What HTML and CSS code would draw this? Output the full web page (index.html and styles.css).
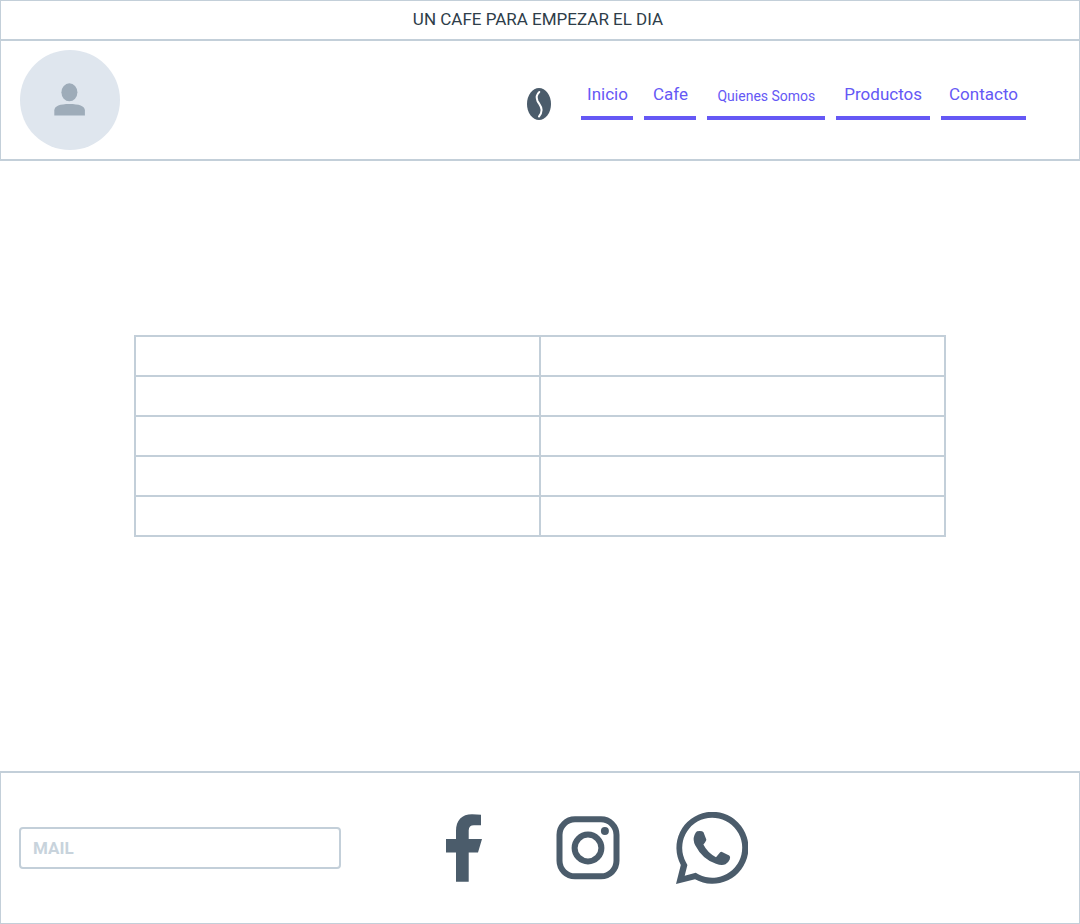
FILE: index.html
```html
<!DOCTYPE html>
<html lang="es">
<head>
<meta charset="utf-8">
<meta name="viewport" content="width=device-width, initial-scale=1">
<title>Un cafe para empezar el dia</title>
<link rel="stylesheet" href="styles.css">
</head>
<body class="page">
<p class="banner">UN CAFE PARA EMPEZAR EL DIA</p>
<header class="header">
  <svg class="avatar" viewBox="0 0 100 100" role="img" aria-label="Perfil">
    <circle class="avatar-disc" cx="50" cy="50" r="50"/>
    <g class="avatar-person">
      <ellipse cx="49.4" cy="42.3" rx="8" ry="9"/>
      <path d="M34.3 65.6V60.5C34.3 56 40 54 49.4 54S64.9 56 64.9 60.5V65.6Z"/>
    </g>
  </svg>
  <nav class="nav">
    <svg class="bean" viewBox="0 0 24 32" aria-hidden="true">
      <ellipse cx="12" cy="16" rx="12" ry="16"/>
      <path class="bean-crease" d="M12.3 4C10 6 9 9.500 10.500 13C12 16 14.800 18.500 14.600 22C14.500 25 13.500 27 12 28.500"/>
    </svg>
    <div class="links">
      <a class="link link-short" href="#inicio">Inicio</a>
      <a class="link link-short" href="#cafe">Cafe</a>
      <a class="link link-small" href="#quienes">Quienes Somos</a>
      <a class="link" href="#productos">Productos</a>
      <a class="link" href="#contacto">Contacto</a>
    </div>
  </nav>
</header>
<main class="main">
  <table class="grid">
    <tbody>
      <tr><td></td><td></td></tr>
      <tr><td></td><td></td></tr>
      <tr><td></td><td></td></tr>
      <tr><td></td><td></td></tr>
      <tr><td></td><td></td></tr>
    </tbody>
  </table>
</main>
<footer class="footer">
  <input class="mail" type="email" placeholder="MAIL" aria-label="Mail">
  <div class="social">
    <a class="social-link" href="#facebook" aria-label="Facebook">
      <svg class="social-icon" viewBox="0 0 72 72"><path d="M28 69.8V40.5H18V27H28V19C28 8 34 2.2 44 2.2Q49 2.2 53 2.8V13.3H46Q40.7 13.3 40.7 18.5V27H54L50 40.5H40.7V69.8Z"/></svg>
    </a>
    <a class="social-link" href="#instagram" aria-label="Instagram">
      <svg class="social-icon" viewBox="0 0 72 72">
        <rect class="stroke" x="7.5" y="7.3" width="57" height="57" rx="15.5"/>
        <circle class="stroke" cx="36" cy="36" r="13.4"/>
        <circle cx="52.9" cy="19" r="4"/>
      </svg>
    </a>
    <a class="social-link" href="#whatsapp" aria-label="WhatsApp">
      <svg class="social-icon" viewBox="0 0 72 72">
        <path fill-rule="evenodd" d="M0 72L4.8 53A36 36 0 1 1 19 67.3ZM8.7 63.7L19.7 60.8A30 30 0 1 0 9.8 50L11.4 53Z"/>
        <path d="M21 19.2Q26 18.2 27.5 20.3L30.3 27.5Q30.3 29 27.4 32.6Q31.5 41 40 45.2L44.2 40.2Q45 39.5 46 40L53.2 43.6Q54.8 44.5 53.7 47.5Q52.5 50.5 49.5 52.2Q46 54 40 51.8Q26.5 47.5 19.2 33.3Q16.5 28 18.5 23Q19.5 20.5 21 19.2Z"/>
      </svg>
    </a>
  </div>
</footer>
</body>
</html>
```
FILE: styles.css
```css
:root {
  --line: #c3cfd9;
  --ink: #2e3d49;
  --icon: #4b5c6b;
  --accent: #6558f5;
}

* {
  box-sizing: border-box;
}

.page {
  display: flex;
  flex-direction: column;
  min-height: 100vh;
  margin: 0;
  background: #fff;
  color: var(--ink);
  font-family: Roboto, "Liberation Sans", sans-serif;
  font-size: 17px;
}

.banner {
  margin: 0;
  padding: 7px 4px 8px 0;
  border: 1px solid var(--line);
  border-bottom-width: 2px;
  line-height: 23px;
  text-align: center;
}

.header {
  display: flex;
  align-items: flex-start;
  justify-content: space-between;
  padding: 9px 53px 9px 19px;
  border: 1px solid var(--line);
  border-top: 0;
  border-bottom-width: 2px;
}

.avatar {
  flex: none;
  width: 100px;
}

.avatar-disc {
  fill: #dfe6ee;
}

.avatar-person {
  fill: #9eacb9;
}

.nav {
  display: flex;
  align-items: flex-end;
  gap: 30px;
  padding-top: 32px;
}

.bean {
  flex: none;
  width: 24px;
  height: 32px;
  fill: var(--icon);
}

.bean-crease {
  fill: none;
  stroke: #fff;
  stroke-width: 2;
  stroke-linecap: round;
}

.links {
  display: flex;
  align-items: flex-end;
  gap: 11px;
}

.link {
  padding: 0 8px 10px;
  border-bottom: 4px solid var(--accent);
  color: var(--accent);
  line-height: 24px;
  text-align: center;
  text-decoration: none;
  white-space: nowrap;
}

.link-short {
  width: 52px;
  padding-right: 0;
  padding-left: 0;
}

.link-small {
  padding-right: 10px;
  padding-left: 10px;
  font-size: 14px;
  line-height: 20px;
}

.main {
  flex: 1;
  padding: 174px 0;
}

.grid {
  width: calc(75% + 2px);
  margin: 0 auto;
  border-collapse: collapse;
  table-layout: fixed;
}

.grid td {
  height: 40px;
  padding: 0;
  border: 2px solid var(--line);
}

.footer {
  display: flex;
  align-items: center;
  gap: 87px;
  padding: 39px 18px;
  border: 1px solid var(--line);
  border-top-width: 2px;
}

.mail {
  width: 322px;
  height: 42px;
  padding: 0 12px;
  border: 2px solid var(--line);
  border-radius: 4px;
  background: #fff;
  color: var(--ink);
  font: bold 17px Roboto, "Liberation Sans", sans-serif;
}

.mail::placeholder {
  color: #c8d3dc;
  opacity: 1;
}

.social {
  display: flex;
  gap: 52px;
}

.social-link {
  display: flex;
}

.social-icon {
  width: 72px;
  height: 72px;
  fill: var(--icon);
}

.stroke {
  fill: none;
  stroke: var(--icon);
  stroke-width: 6;
}
```
